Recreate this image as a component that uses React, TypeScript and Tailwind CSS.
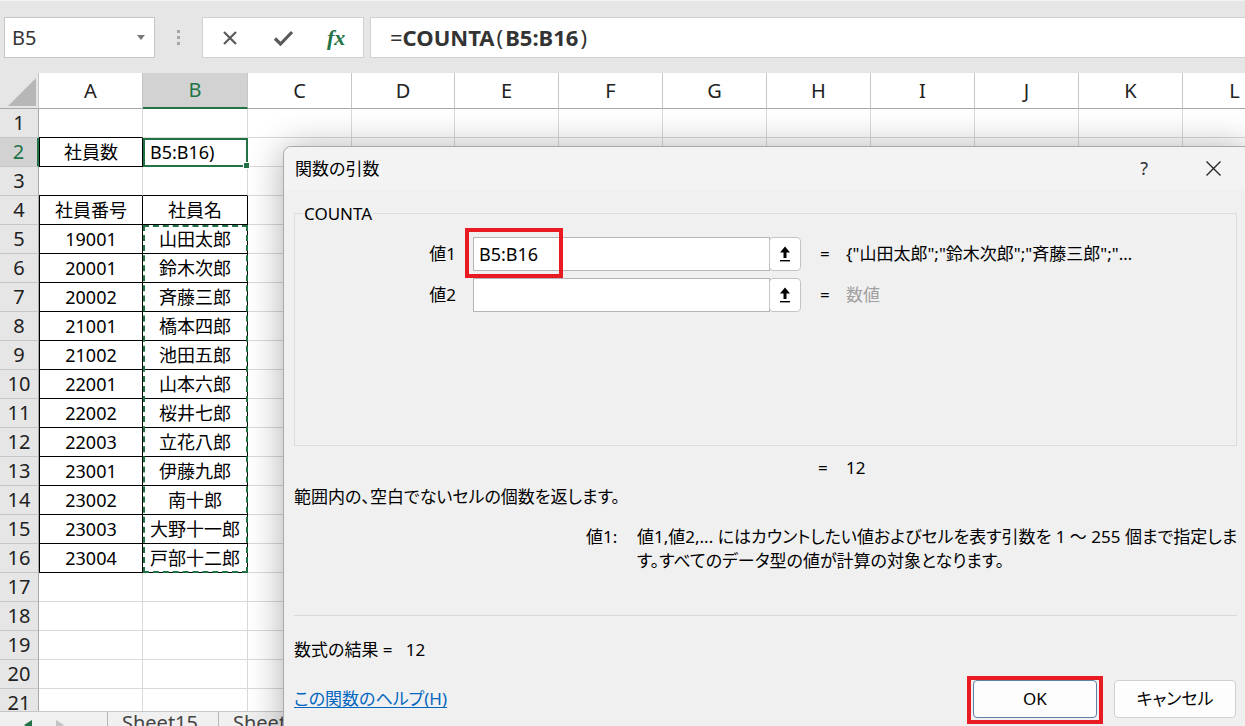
import React from 'react';

const GREEN = '#217346';

const COLS = [
  { k: 'A', w: 'w-[104px]' },
  { k: 'B', w: 'w-[105px]' },
  { k: 'C', w: 'w-[104px]' },
  { k: 'D', w: 'w-[103px]' },
  { k: 'E', w: 'w-[104px]' },
  { k: 'F', w: 'w-[104px]' },
  { k: 'G', w: 'w-[104px]' },
  { k: 'H', w: 'w-[104px]' },
  { k: 'I', w: 'w-[104px]' },
  { k: 'J', w: 'w-[104px]' },
  { k: 'K', w: 'w-[104px]' },
  { k: 'L', w: 'w-[104px]' },
];

const ROWS = Array.from({ length: 21 }, (_, i) => i + 1);

const colA: { [key: number]: string } = {
  2: '社員数',
  4: '社員番号',
  5: '19001',
  6: '20001',
  7: '20002',
  8: '21001',
  9: '21002',
  10: '22001',
  11: '22002',
  12: '22003',
  13: '23001',
  14: '23002',
  15: '23003',
  16: '23004',
};

const names = [
  '山田太郎', '鈴木次郎', '斉藤三郎', '橋本四郎', '池田五郎', '山本六郎',
  '桜井七郎', '立花八郎', '伊藤九郎', '南十郎', '大野十一郎', '戸部十二郎',
];

type Edge = 'g' | 'k' | 'n';

function Cell({
  b = 'g',
  r = 'g',
  l = false,
  children,
}: {
  b?: Edge;
  r?: Edge;
  l?: boolean;
  children?: React.ReactNode;
}) {
  const bb = b === 'k' ? 'border-b border-b-black' : b === 'g' ? 'border-b border-b-[#d9d9d9]' : '';
  const rr = r === 'k' ? 'border-r border-r-black' : r === 'g' ? 'border-r border-r-[#d9d9d9]' : '';
  const ll = l ? 'border-l border-l-black' : '';
  return (
    <div className={`h-[29px] shrink-0 flex items-center justify-center text-[18px] text-black ${bb} ${rr} ${ll}`}>
      {children}
    </div>
  );
}

function ColHeader({ k, active }: { k: string; active?: boolean }) {
  return active ? (
    <div className="h-[36px] shrink-0 flex items-center justify-center text-[20px] bg-[#d2d2d2] text-[#217346] border-r border-r-[#c6c6c6] border-b-2 border-b-[#217346]">
      {k}
    </div>
  ) : (
    <div className="h-[36px] shrink-0 flex items-center justify-center text-[20px] text-[#222] border-r border-r-[#c6c6c6] border-b border-b-[#a8a8a8]">
      {k}
    </div>
  );
}

function ColumnA() {
  return (
    <div className="w-[104px] shrink-0 flex flex-col">
      <ColHeader k="A" />
      {ROWS.map((r) => {
        const inTable = r === 2 || (r >= 4 && r <= 16);
        const bottomBlack = r <= 16;
        return (
          <Cell key={r} b={bottomBlack ? 'k' : 'g'} r={inTable ? 'k' : 'g'} l={inTable}>
            {colA[r]}
          </Cell>
        );
      })}
    </div>
  );
}

function ColumnB() {
  return (
    <div className="w-[105px] shrink-0 flex flex-col">
      <ColHeader k="B" active />
      <Cell />
      <div className="h-[29px] shrink-0 relative border-2 border-[#217346] flex items-center pl-[5px] text-[18px] text-black">
        B5:B16)
        <span className="absolute -right-[4px] -bottom-[4px] w-[7px] h-[7px] bg-[#217346] border border-white" />
      </div>
      <Cell b="k" />
      <Cell b="k" r="k">社員名</Cell>
      <div className="flex flex-col outline-2 outline-dashed outline-[#217346] -outline-offset-2">
        {names.map((n) => (
          <Cell key={n} b="k" r="k">
            {n}
          </Cell>
        ))}
      </div>
      {[17, 18, 19, 20, 21].map((r) => (
        <Cell key={r} />
      ))}
    </div>
  );
}

function EmptyColumn({ k, w }: { k: string; w: string }) {
  return (
    <div className={`${w} shrink-0 flex flex-col`}>
      <ColHeader k={k} />
      {ROWS.map((r) => (
        <Cell key={r} />
      ))}
    </div>
  );
}

function RowHeaders() {
  return (
    <div className="w-[39px] shrink-0 flex flex-col bg-[#e6e6e6]">
      <div className="h-[36px] shrink-0 relative border-r border-r-[#c6c6c6] border-b border-b-[#a8a8a8]">
        <svg className="absolute left-[8px] top-[5px]" width="28" height="28" viewBox="0 0 28 28">
          <polygon points="28,0 28,28 0,28" fill="#b7b7b7" />
        </svg>
      </div>
      {ROWS.map((r) =>
        r === 2 ? (
          <div
            key={r}
            className="h-[29px] shrink-0 flex items-center justify-center text-[20px] bg-[#d2d2d2] text-[#217346] border-b border-b-[#c6c6c6] border-r-2 border-r-[#217346]"
          >
            {r}
          </div>
        ) : (
          <div
            key={r}
            className="h-[29px] shrink-0 flex items-center justify-center text-[20px] text-[#222] border-b border-b-[#c6c6c6] border-r border-r-[#a8a8a8]"
          >
            {r}
          </div>
        )
      )}
    </div>
  );
}

function FormulaBar() {
  return (
    <div className="h-[73px] bg-[#e6e6e6] border-t border-t-[#f4f4f4] pt-[16px]">
      <div className="h-[41px] flex">
        {/* Name box */}
        <div className="ml-[4px] w-[151px] bg-white border border-[#c6c6c6] flex items-center pl-[7px] pr-[9px] text-[20px] text-[#333]">
          <span>B5</span>
          <svg className="ml-auto" width="8" height="5" viewBox="0 0 8 5">
            <polygon points="0,0 8,0 4,5" fill="#777" />
          </svg>
        </div>
        {/* grip */}
        <div className="w-[47px] flex flex-col items-center justify-center gap-[3px]">
          <span className="w-[3px] h-[3px] bg-[#a6a6a6]" />
          <span className="w-[3px] h-[3px] bg-[#a6a6a6]" />
          <span className="w-[3px] h-[3px] bg-[#a6a6a6]" />
        </div>
        {/* buttons */}
        <div className="w-[162px] bg-white border border-[#d0d0d0] flex items-center">
          <svg className="ml-[19px]" width="16" height="16" viewBox="0 0 16 16">
            <path d="M2 2 L14 14 M14 2 L2 14" stroke="#5a5a5a" strokeWidth="2.2" fill="none" />
          </svg>
          <svg className="ml-[35px]" width="21" height="16" viewBox="0 0 21 16">
            <path d="M2 8.5 L7.5 14 L19 2" stroke="#5a5a5a" strokeWidth="3.2" fill="none" />
          </svg>
          <span className="ml-[33px] font-['Liberation_Serif',serif] italic font-bold text-[22px] leading-none text-[#217346]">
            fx
          </span>
        </div>
        {/* formula */}
        <div className="ml-[6px] flex-1 bg-white border border-r-0 border-[#d0d0d0] flex items-center pl-[19px] text-[22px] text-[#333]">
          <span className="font-normal">=</span>
          <span className="font-bold">COUNTA</span>
          <span className="font-normal mx-[2px]">(</span>
          <span className="font-bold">B5:B16</span>
          <span className="font-normal ml-[2px]">)</span>
        </div>
      </div>
    </div>
  );
}

function UploadButton() {
  return (
    <div className="w-[32px] h-full shrink-0 -ml-px bg-white border border-[#c4c4c4] rounded-[4px] flex items-center justify-center">
      <svg width="10" height="16" viewBox="0 0 10 16">
        <polygon points="5,0.5 10,6.5 0,6.5" fill="#000" />
        <rect x="3.5" y="6" width="3" height="6" fill="#000" />
        <rect x="0" y="14" width="10" height="1.4" fill="#000" />
      </svg>
    </div>
  );
}

function ArgRow({
  label,
  value,
  result,
  muted,
  highlight,
}: {
  label: string;
  value: string;
  result: string;
  muted?: boolean;
  highlight?: boolean;
}) {
  return (
    <div className="flex items-center h-[34px]">
      <div className="w-[161px] text-right">{label}</div>
      <div className="ml-[17px] w-[328px] h-full flex relative">
        <div className="flex-1 bg-white border border-[#b5b5b5] flex items-center pl-[5px] text-[18px]">
          {value}
        </div>
        <UploadButton />
        {highlight && (
          <div className="absolute -left-[8px] -top-[9px] w-[98px] h-[50px] border-4 border-[#e81b23]" />
        )}
      </div>
      <span className="ml-[19px] w-[26px]">=</span>
      <span className={muted ? 'text-[#a0a0a0]' : 'text-black'}>{result}</span>
    </div>
  );
}

function Dialog() {
  return (
    <div className="absolute left-[283px] top-[146px] w-[965px] h-[600px] bg-[#f0f0f0] border border-[#a9a9a9] rounded-tl-[8px] shadow-[0_2px_36px_rgba(0,0,0,0.32)] text-[17px] text-black [font-feature-settings:'palt']">
      <div className="h-[43px] bg-[#f3f3f3] rounded-tl-[8px] flex items-center pl-[11px] pr-[26px]">
        <span>関数の引数</span>
        <span className="ml-auto text-[18px] text-[#333]">?</span>
        <svg className="ml-[58px]" width="15" height="15" viewBox="0 0 15 15">
          <path d="M0.5 0.5 L14.5 14.5 M14.5 0.5 L0.5 14.5" stroke="#222" strokeWidth="1.3" fill="none" />
        </svg>
      </div>

      <div className="px-[10px]">
        <div className="relative mt-[23px] h-[233px] border border-[#dcdcdc]">
          <span className="absolute -top-[11px] left-[8px] px-[1px] bg-[#f0f0f0] leading-[22px]">COUNTA</span>
          <div className="pt-[23px] flex flex-col gap-[7px]">
            <ArgRow
              label="値1"
              value="B5:B16"
              result={'{"山田太郎";"鈴木次郎";"斉藤三郎";"…'}
              highlight
            />
            <ArgRow label="値2" value="" result="数値" muted />
          </div>
        </div>

        <div className="mt-[10px] leading-[24px] pl-[524px] flex">
          <span className="w-[28px]">=</span>
          <span>12</span>
        </div>

        <div className="mt-[5px] leading-[24px]">範囲内の、空白でないセルの個数を返します。</div>

        <div className="mt-[16px] flex leading-[24px] whitespace-nowrap">
          <div className="ml-[292px] w-[51px] shrink-0">値1:</div>
          <div>
            <div>値1,値2,... にはカウントしたい値およびセルを表す引数を 1 ～ 255 個まで指定しま</div>
            <div>す。すべてのデータ型の値が計算の対象となります。</div>
          </div>
        </div>

        <div className="mt-[42px] border-t border-[#d9d9d9]" />

        <div className="mt-[22px] leading-[24px]">
          数式の結果 =&nbsp;&nbsp; 12
        </div>

        <div className="mt-[18px] h-[38px] flex items-center">
          <span className="text-[#0067c0] underline underline-offset-2">この関数のヘルプ(H)</span>
          <div className="ml-auto relative w-[124px] h-full">
            <button className="w-full h-full bg-[#fdfdfd] border border-[#5e7fa8] rounded-[4px] text-[17px]">
              OK
            </button>
            <div className="absolute -left-[6px] -right-[6px] -top-[4px] -bottom-[6px] border-4 border-[#e81b23]" />
          </div>
          <button className="ml-[17px] mr-px w-[122px] h-full bg-[#fdfdfd] border border-[#d0d0d0] rounded-[4px] text-[17px]">
            キャンセル
          </button>
        </div>
      </div>
    </div>
  );
}

function SheetTabs() {
  return (
    <div className="h-[15px] bg-[#f0f0f0] border-t border-t-[#c6c6c6] flex relative overflow-hidden">
      <svg className="absolute left-[24px] top-[8px]" width="8" height="10" viewBox="0 0 8 10">
        <polygon points="8,0 8,10 0,5" fill={GREEN} />
      </svg>
      <svg className="absolute left-[56px] top-[8px]" width="8" height="10" viewBox="0 0 8 10">
        <polygon points="0,0 0,10 8,5" fill="#c4c4c4" />
      </svg>
      <div className="ml-[107px] w-px h-full bg-[#b5b5b5]" />
      <div className="ml-[14px] w-[96px] text-[20px] leading-[20px] pt-px text-[#444]">Sheet15</div>
      <div className="w-px h-full bg-[#b5b5b5]" />
      <div className="ml-[14px] text-[20px] leading-[20px] pt-px text-[#444]">Sheet16</div>
    </div>
  );
}

export default function App() {
  return (
    <div className="relative w-[1245px] h-[726px] overflow-hidden bg-white font-['Noto_Sans','Noto_Sans_CJK_JP',sans-serif]">
      <FormulaBar />
      <div className="h-[638px] flex overflow-hidden">
        <RowHeaders />
        <ColumnA />
        <ColumnB />
        {COLS.slice(2).map((c) => (
          <EmptyColumn key={c.k} k={c.k} w={c.w} />
        ))}
      </div>
      <SheetTabs />
      <Dialog />
    </div>
  );
}
